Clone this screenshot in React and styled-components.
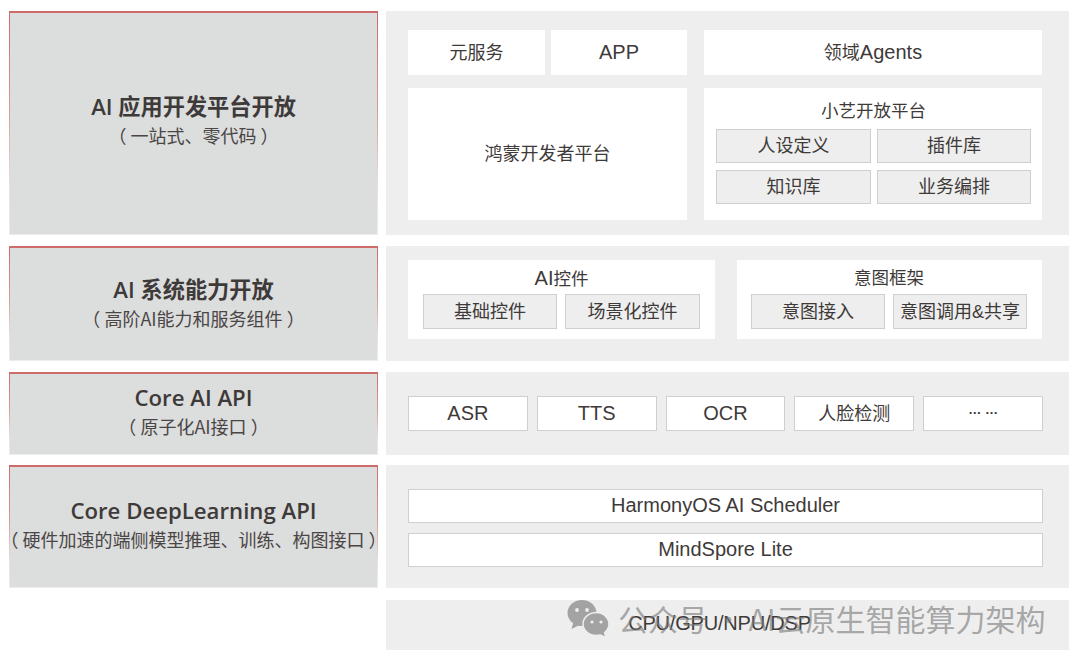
import React from "react";
import styled, { createGlobalStyle } from "styled-components";

const GlobalStyle = createGlobalStyle`
  html, body {
    margin: 0;
    padding: 0;
    background: #fff;
  }
  * {
    box-sizing: border-box;
  }
`;

const sans = `"Liberation Sans", "Noto Sans CJK SC", sans-serif`;
const heading = `"Open Sans", "Noto Sans CJK SC", sans-serif`;

const Page = styled.div`
  position: relative;
  width: 1080px;
  height: 663px;
  padding: 11px 0 0 9px;
  display: flex;
  flex-direction: column;
  gap: 11px;
  overflow: hidden;
  font-family: ${sans};
  color: #3e3a39;
`;

const Row = styled.div`
  display: grid;
  grid-template-columns: 369px 683px;
  column-gap: 8px;
  height: ${(props) => props.$height}px;
  margin-top: ${(props) => props.$nudge || 0}px;
`;

const LayerCard = styled.div`
  display: flex;
  flex-direction: column;
  align-items: center;
  justify-content: center;
  padding-bottom: ${(props) => props.$lift || 0}px;
  background: #dcdddd;
  border-style: solid;
  border-color: transparent;
  border-width: 2px 1px 1px 1px;
  border-image: linear-gradient(#cd6b6a 0%, #d99a98 45%, #e8e0dc 78%, #ecedec 100%) 2 1 1 1;
`;

const LayerTitle = styled.div`
  font-family: ${heading};
  font-size: 22.2px;
  line-height: 29px;
  font-weight: 600;
  white-space: nowrap;
`;

const LayerNote = styled.div`
  font-family: "Noto Sans CJK SC", sans-serif;
  font-size: 18px;
  line-height: 29px;
  color: #4a4645;
  white-space: pre;
`;

const Panel = styled.div`
  grid-column: 2;
  background: #eeeeee;
  padding: ${(props) => props.$padding};
  display: flex;
  flex-direction: column;
`;

const SplitGrid = styled.div`
  display: grid;
  grid-template-columns: ${(props) => props.$columns};
  grid-template-rows: ${(props) => props.$rows || "auto"};
  column-gap: ${(props) => props.$gap}px;
  row-gap: 13px;
  height: 100%;
`;

const WhiteBox = styled.div`
  background: #fff;
  display: flex;
  align-items: center;
  justify-content: center;
  font-size: 18px;
  line-height: 22px;
`;

const SplitCell = styled.div`
  display: grid;
  grid-template-columns: 137px 136px;
  column-gap: 6px;
`;

const GroupBox = styled.div`
  background: #fff;
  padding: ${(props) => props.$padding};
  text-align: center;
`;

const GroupTitle = styled.div`
  font-size: 17.5px;
  height: ${(props) => props.$height}px;
  line-height: ${(props) => props.$height}px;
`;

const TileGrid = styled.div`
  display: grid;
  grid-template-columns: ${(props) => props.$columns};
  column-gap: ${(props) => props.$gap}px;
  row-gap: 7px;
`;

const Tile = styled.div`
  height: ${(props) => props.$height || 34}px;
  display: flex;
  align-items: center;
  justify-content: center;
  background: ${(props) => (props.$white ? "#fff" : "#eeeeee")};
  border: 1px solid #cfcfcf;
  font-size: 18px;
  line-height: 22px;
  white-space: nowrap;
`;

const Latin = styled.span`
  font-size: 20px;
  margin-bottom: 2px;
`;

const Dots = styled.span`
  font-size: 13px;
  font-weight: 700;
  margin-bottom: 7px;
`;

const ApiRow = styled.div`
  display: grid;
  grid-template-columns: repeat(5, 1fr);
  column-gap: 9px;
`;

const BarStack = styled.div`
  display: flex;
  flex-direction: column;
  gap: 10px;
`;

const HardwarePanel = styled.div`
  grid-column: 2;
  background: #eeeeee;
  display: flex;
  align-items: center;
  justify-content: center;
  padding: 0 16px 4px 0;
  font-size: 20px;
  letter-spacing: -0.2px;
`;

const Watermark = styled.div`
  position: absolute;
  left: 567px;
  top: 599px;
  display: flex;
  align-items: center;
  gap: 8px;
  color: rgba(120, 120, 120, 0.62);
  font-family: "Noto Sans CJK SC", sans-serif;
  font-size: 30px;
  line-height: 38px;
  word-spacing: -1.5px;
  white-space: nowrap;
`;

const WechatIcon = () => (
  <svg width="43" height="38" viewBox="0 0 43 38">
    <path d="M15 1C6.900 1 .5 6.900.5 14c0 4.200 2.200 7.800 5.600 10.200L4.500 30l6.600-3.300c1.300.3 2.600.4 3.900.4 8.100 0 14.500-5.900 14.500-13.100S23.100 1 15 1z" fill="#a3a3a3" />
    <circle cx="10" cy="11" r="1.900" fill="#eee" />
    <circle cx="20" cy="11" r="1.900" fill="#eee" />
    <path d="M29.500 13.500c-7.500 0-13.500 5.200-13.500 11.500s6 11.500 13.500 11.500c1.300 0 2.600-.2 3.800-.5l5.700 2.500-1.400-5c2.800-2.100 4.400-5.100 4.400-8.500 0-6.300-5.900-11.500-12.500-11.500z" fill="#a3a3a3" stroke="#eee" strokeWidth="1.500" />
    <circle cx="25" cy="23" r="1.600" fill="#eee" />
    <circle cx="34" cy="23" r="1.600" fill="#eee" />
  </svg>
);

const App = () => (
  <Page>
    <GlobalStyle />

    <Row $height={224}>
      <LayerCard $lift={5}>
        <LayerTitle>AI 应用开发平台开放</LayerTitle>
        <LayerNote>（ 一站式、零代码 ）</LayerNote>
      </LayerCard>
      <Panel $padding="19px 27px 15px 22px">
        <SplitGrid $columns="279px 338px" $rows="45px 132px" $gap={17}>
          <SplitCell>
            <WhiteBox>元服务</WhiteBox>
            <WhiteBox><Latin>APP</Latin></WhiteBox>
          </SplitCell>
          <WhiteBox>领域<Latin>Agents</Latin></WhiteBox>
          <WhiteBox>鸿蒙开发者平台</WhiteBox>
          <GroupBox $padding="6px 11px 0 12px">
            <GroupTitle $height={35}>小艺开放平台</GroupTitle>
            <TileGrid $columns="155px 154px" $gap={6}>
              <Tile>人设定义</Tile>
              <Tile>插件库</Tile>
              <Tile>知识库</Tile>
              <Tile>业务编排</Tile>
            </TileGrid>
          </GroupBox>
        </SplitGrid>
      </Panel>
    </Row>

    <Row $height={115}>
      <LayerCard $lift={1}>
        <LayerTitle>AI 系统能力开放</LayerTitle>
        <LayerNote>（ 高阶AI能力和服务组件 ）</LayerNote>
      </LayerCard>
      <Panel $padding="14px 27px 22px 22px">
        <SplitGrid $columns="307px 305px" $gap={22}>
          <GroupBox $padding="2px 15px 0">
            <GroupTitle $height={32}><Latin>AI</Latin>控件</GroupTitle>
            <TileGrid $columns="134px 135px" $gap={8}>
              <Tile $height={35}>基础控件</Tile>
              <Tile $height={35}>场景化控件</Tile>
            </TileGrid>
          </GroupBox>
          <GroupBox $padding="2px 15px 0 14px">
            <GroupTitle $height={32}>意图框架</GroupTitle>
            <TileGrid $columns="134px 134px" $gap={8}>
              <Tile $height={35}>意图接入</Tile>
              <Tile $height={35}>意图调用&amp;共享</Tile>
            </TileGrid>
          </GroupBox>
        </SplitGrid>
      </Panel>
    </Row>

    <Row $height={83}>
      <LayerCard $lift={4}>
        <LayerTitle>Core AI API</LayerTitle>
        <LayerNote>（ 原子化AI接口 ）</LayerNote>
      </LayerCard>
      <Panel $padding="24px 26px 0 22px">
        <ApiRow>
          <Tile $white $height={35}><Latin>ASR</Latin></Tile>
          <Tile $white $height={35}><Latin>TTS</Latin></Tile>
          <Tile $white $height={35}><Latin>OCR</Latin></Tile>
          <Tile $white $height={35}>人脸检测</Tile>
          <Tile $white $height={35}><Dots>… …</Dots></Tile>
        </ApiRow>
      </Panel>
    </Row>

    <Row $height={123} $nudge={-1}>
      <LayerCard $lift={4}>
        <LayerTitle>Core DeepLearning API</LayerTitle>
        <LayerNote>（ 硬件加速的端侧模型推理、训练、构图接口 ）</LayerNote>
      </LayerCard>
      <Panel $padding="24px 26px 0 22px">
        <BarStack>
          <Tile $white><Latin>HarmonyOS AI Scheduler</Latin></Tile>
          <Tile $white><Latin>MindSpore Lite</Latin></Tile>
        </BarStack>
      </Panel>
    </Row>

    <Row $height={50} $nudge={1}>
      <HardwarePanel>CPU/GPU/NPU/DSP</HardwarePanel>
    </Row>

    <Watermark>
      <WechatIcon />
      <span>公众号 · AI云原生智能算力架构</span>
    </Watermark>
  </Page>
);

export default App;
